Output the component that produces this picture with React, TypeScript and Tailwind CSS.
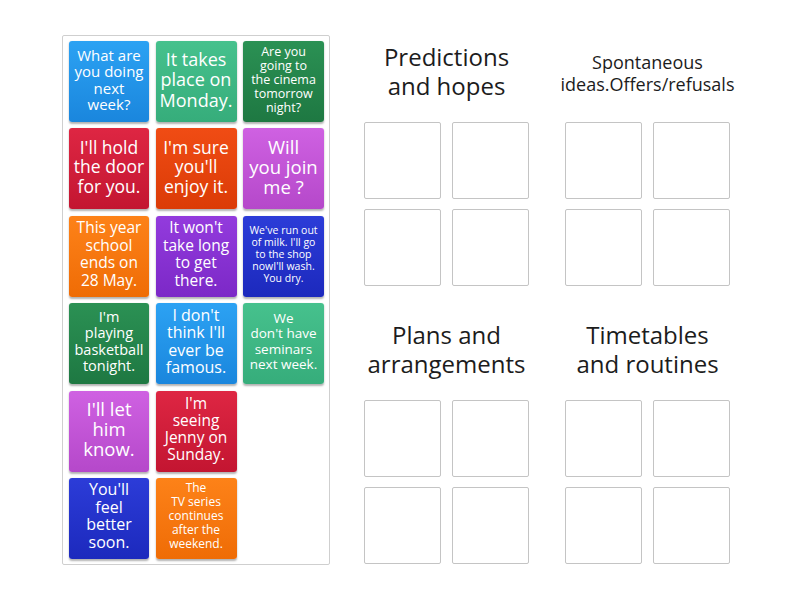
import React from "react";

type Card = { lines: string[]; bg: string; text: string } | null;

const cards: Card[] = [
  { lines: ["What are", "you doing", "next", "week?"], bg: "bg-gradient-to-b from-[#2ca2f3] to-[#1a86dd]", text: "text-[15px] leading-[16.5px]" },
  { lines: ["It takes", "place on", "Monday."], bg: "bg-gradient-to-b from-[#46c18d] to-[#36ad7b]", text: "text-[18px] leading-[20.5px]" },
  { lines: ["Are you", "going to", "the cinema", "tomorrow", "night?"], bg: "bg-gradient-to-b from-[#2b9154] to-[#1e7842]", text: "text-[12.5px] leading-[14px]" },
  { lines: ["I'll hold", "the door", "for you."], bg: "bg-gradient-to-b from-[#de2643] to-[#c31531]", text: "text-[17.5px] leading-[19.5px]" },
  { lines: ["I'm sure", "you'll", "enjoy it."], bg: "bg-gradient-to-b from-[#f04c14] to-[#db3b06]", text: "text-[17.5px] leading-[19.5px]" },
  { lines: ["Will", "you join", "me ?"], bg: "bg-gradient-to-b from-[#cf61e2] to-[#b548ca]", text: "text-[18.5px] leading-[20px]" },
  { lines: ["This year", "school", "ends on", "28 May."], bg: "bg-gradient-to-b from-[#fd8218] to-[#ef6c05]", text: "text-[15.5px] leading-[17.5px]" },
  { lines: ["It won't", "take long", "to get", "there."], bg: "bg-gradient-to-b from-[#933bdd] to-[#7c28c7]", text: "text-[15.5px] leading-[17.5px]" },
  { lines: ["We've run out", "of milk. I'll go", "to the shop", "nowI'll wash.", "You dry."], bg: "bg-gradient-to-b from-[#2c3cd8] to-[#1c29bd]", text: "text-[10.5px] leading-[12px]" },
  { lines: ["I'm", "playing", "basketball", "tonight."], bg: "bg-gradient-to-b from-[#2b9154] to-[#1e7842]", text: "text-[14.5px] leading-[16.5px]" },
  { lines: ["I don't", "think I'll", "ever be", "famous."], bg: "bg-gradient-to-b from-[#2ca2f3] to-[#1a86dd]", text: "text-[16px] leading-[17.5px]" },
  { lines: ["We", "don't have", "seminars", "next week."], bg: "bg-gradient-to-b from-[#46c18d] to-[#36ad7b]", text: "text-[13.5px] leading-[15.3px]" },
  { lines: ["I'll let", "him", "know."], bg: "bg-gradient-to-b from-[#cf61e2] to-[#b548ca]", text: "text-[18.5px] leading-[20px]" },
  { lines: ["I'm", "seeing", "Jenny on", "Sunday."], bg: "bg-gradient-to-b from-[#de2643] to-[#c31531]", text: "text-[15.5px] leading-[17px]" },
  null,
  { lines: ["You'll", "feel", "better", "soon."], bg: "bg-gradient-to-b from-[#2c3cd8] to-[#1c29bd]", text: "text-[16px] leading-[17.5px]" },
  { lines: ["The", "TV series", "continues", "after the", "weekend."], bg: "bg-gradient-to-b from-[#fd8218] to-[#ef6c05]", text: "text-[12px] leading-[14px]" },
];

type Section = { lines: string[]; text: string };

const sections: Section[] = [
  { lines: ["Predictions", "and hopes"], text: "text-[24px] leading-[29px]" },
  { lines: ["Spontaneous", "ideas.Offers/refusals"], text: "text-[18px] leading-[22px]" },
  { lines: ["Plans and", "arrangements"], text: "text-[24px] leading-[29px]" },
  { lines: ["Timetables", "and routines"], text: "text-[24px] leading-[29px]" },
];

export default function App() {
  return (
    <div
      className="w-[800px] h-[600px] bg-white flex gap-[34px] pl-[62px] pt-[35px]"
      style={{ fontFamily: "'Open Sans', 'Noto Sans', sans-serif" }}
    >
      <div className="w-[268px] h-[530px] border border-[#cfcfcf] rounded-[2px] px-[6px] pt-[5px] pb-[5px]">
        <div className="grid grid-cols-[80px_81px_81px] gap-x-[6.5px] gap-y-[6.4px]">
          {cards.map((c, i) =>
            c ? (
              <div
                key={i}
                className={`h-[81px] pb-[4px] rounded-[3px] shadow-[0_1.5px_2px_rgba(0,0,0,0.3)] flex items-center justify-center text-center text-white ${c.bg}`}
              >
                <div className={`whitespace-nowrap ${c.text}`}>
                  {c.lines.map((l, j) => (
                    <React.Fragment key={j}>
                      {j > 0 && <br />}
                      {l}
                    </React.Fragment>
                  ))}
                </div>
              </div>
            ) : (
              <div key={i} className="h-[81px]" />
            )
          )}
        </div>
      </div>
      <div className="grid grid-cols-[165px_165px] gap-x-[36px] gap-y-[27px] self-start">
        {sections.map((s, i) => (
          <div key={i} className="flex flex-col">
            <div
              className={`h-[75px] flex items-center justify-center text-center text-[#1c1c1c] ${
                i === 1 ? "pb-[0px]" : "pb-[4px]"
              }`}
            >
              <div className={`whitespace-nowrap ${s.text}`}>
                {s.lines.map((l, j) => (
                  <React.Fragment key={j}>
                    {j > 0 && <br />}
                    {l}
                  </React.Fragment>
                ))}
              </div>
            </div>
            <div className="mt-[12px] grid grid-cols-[77px_77px] gap-x-[11px] gap-y-[10px]">
              {[0, 1, 2, 3].map((b) => (
                <div key={b} className="h-[77px] border border-[#c4c4c4] rounded-[2px] bg-white" />
              ))}
            </div>
          </div>
        ))}
      </div>
    </div>
  );
}
